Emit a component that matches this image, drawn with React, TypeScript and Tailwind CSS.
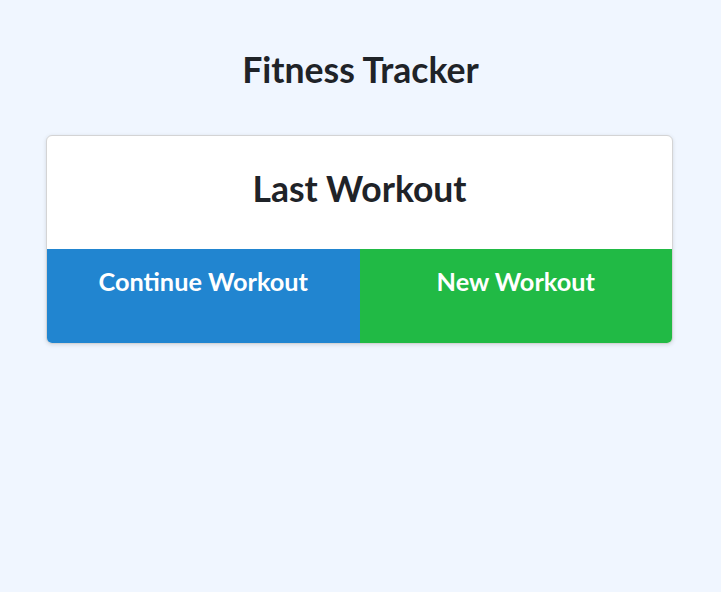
export default function App() {
  return (
    <div className="min-h-[592px] w-full bg-[#f0f6ff] flex flex-col items-center pt-[47px]" style={{ fontFamily: "Lato, 'Noto Sans', sans-serif" }}>
      <h1 className="text-[35.6px] font-bold text-[#1f2328] leading-[46px]">Fitness Tracker</h1>
      <div className="mt-[42px] mr-[2px] w-[627px] rounded-[6px] border border-[#d4d4d5] bg-white shadow-[0_1px_4px_rgba(0,0,0,0.12)] overflow-hidden">
        <div className="h-[113px] flex items-center justify-center pb-[7px]">
          <h2 className="text-[35.5px] font-bold text-[#1f2328] leading-[44px]">Last Workout</h2>
        </div>
        <div className="grid grid-cols-2 h-[94px]">
          <button className="bg-[#2185d0] text-white text-[25.3px] leading-[37px] font-bold flex justify-center pt-[14px]">Continue Workout</button>
          <button className="bg-[#21ba45] text-white text-[25.3px] leading-[37px] font-bold flex justify-center pt-[14px]">New Workout</button>
        </div>
      </div>
    </div>
  );
}
